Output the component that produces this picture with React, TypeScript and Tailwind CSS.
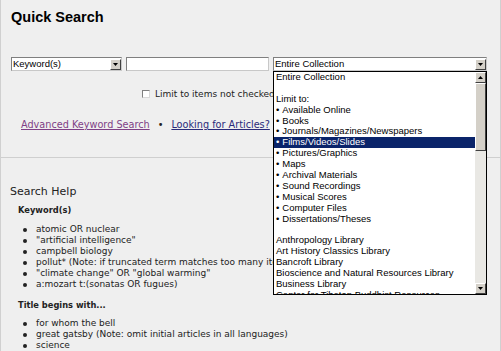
import React from 'react';

const sans = { fontFamily: '"Liberation Sans", Arial, sans-serif' };
const verdana = { fontFamily: '"DejaVu Sans", Verdana, sans-serif' };

function Arrow({ up = false }: { up?: boolean }) {
  return (
    <div className="w-[11px] h-[11px] shrink-0 bg-[#d4d0c8] border border-t-white border-l-white border-b-[#404040] border-r-[#404040] flex items-center justify-center">
      <svg width="5" height="3" viewBox="0 0 5 3">
        {up ? <polygon points="0,3 5,3 2.5,0" fill="#000" /> : <polygon points="0,0 5,0 2.5,3" fill="#000" />}
      </svg>
    </div>
  );
}

function Select({ label, width, open = false }: { label: string; width: string; open?: boolean }) {
  return (
    <div className={`relative ${width} h-[14px]`}>
      <div className="h-full bg-white border border-[#7f7f7f] border-b-[#c8c8c8] border-r-[#c8c8c8] flex items-center pl-[1px]">
        <span className="flex-1 text-[9.5px] leading-[12px] text-black" style={sans}>
          {label}
        </span>
        <Arrow />
      </div>
      {open && <Dropdown />}
    </div>
  );
}

const options: { text: string; bullet?: boolean; selected?: boolean }[] = [
  { text: 'Entire Collection' },
  { text: '' },
  { text: 'Limit to:' },
  { text: 'Available Online', bullet: true },
  { text: 'Books', bullet: true },
  { text: 'Journals/Magazines/Newspapers', bullet: true },
  { text: 'Films/Videos/Slides', bullet: true, selected: true },
  { text: 'Pictures/Graphics', bullet: true },
  { text: 'Maps', bullet: true },
  { text: 'Archival Materials', bullet: true },
  { text: 'Sound Recordings', bullet: true },
  { text: 'Musical Scores', bullet: true },
  { text: 'Computer Files', bullet: true },
  { text: 'Dissertations/Theses', bullet: true },
  { text: '' },
  { text: 'Anthropology Library' },
  { text: 'Art History Classics Library' },
  { text: 'Bancroft Library' },
  { text: 'Bioscience and Natural Resources Library' },
  { text: 'Business Library' },
  { text: 'Center for Tibetan Buddhist Resources' },
];

function Dropdown() {
  return (
    <div className="absolute left-0 top-[14px] w-full h-[224px] bg-white border border-black flex z-10">
      <div className="flex-1 overflow-hidden" style={sans}>
        {options.map((o, i) => (
          <div
            key={i}
            className={`h-[10.9px] leading-[10.9px] text-[9.5px] pl-[2px] whitespace-nowrap ${
              o.selected ? 'bg-[#0a246a] text-white' : 'text-black'
            }`}
          >
            {o.bullet && <span className="mr-[3px]">•</span>}
            {o.text}
          </div>
        ))}
      </div>
      <div className="w-[11px] flex flex-col">
        <Arrow up />
        <div className="h-[68px] bg-[#d4d0c8] border border-t-white border-l-white border-b-[#404040] border-r-[#404040]" />
        <div className="flex-1 bg-[#e9e8e4]" />
        <Arrow />
      </div>
    </div>
  );
}

function Bullet({ children }: { children: React.ReactNode }) {
  return (
    <li className="h-[11px] flex items-center">
      <span className="w-[4px] h-[4px] rounded-full bg-[#222] ml-[22px] mr-[9px] shrink-0" />
      <span className="leading-[11px] whitespace-nowrap">{children}</span>
    </li>
  );
}

export default function App() {
  return (
    <div className="w-[501px] h-[351px] overflow-hidden bg-[#efefef] border-l border-r border-[#d0d0d0] text-[#222]">
      <div className="mt-[9px] h-[16px] pl-[10px] text-[14.5px] leading-[16px] font-bold text-black" style={sans}>
        Quick Search
      </div>

      <div className="mt-[32px] pl-[10px] flex gap-[4px] items-start">
        <Select label="Keyword(s)" width="w-[111px]" />
        <div className="w-[143px] h-[14px] bg-white border border-[#7f7f7f] border-b-[#c8c8c8] border-r-[#c8c8c8]" />
        <Select label="Entire Collection" width="w-[214px]" open />
      </div>

      <div className="mt-[17px] h-[12px] pl-[141px] flex items-center gap-[5px]" style={verdana}>
        <span className="w-[8px] h-[8px] bg-white border border-[#808080] border-b-[#d8d8d8] border-r-[#d8d8d8]" />
        <span className="text-[9px] leading-[12px] whitespace-nowrap">Limit to items not checked out</span>
      </div>

      <div className="mt-[18px] h-[14px] pl-[20px] flex items-center text-[9.7px] leading-[14px]" style={verdana}>
        <a href="#" className="underline text-[#7f3f86]">Advanced Keyword Search</a>
        <span className="mx-[8px] text-[#222]">•</span>
        <a href="#" className="underline text-[#2a2a7a]">Looking for Articles?</a>
      </div>

      <div className="mt-[25px] h-px bg-[#cfcfcf]" />

      <div style={verdana}>
        <div className="mt-[27px] h-[14px] pl-[9px] text-[11px] leading-[14px] text-[#222]">Search Help</div>
        <div className="mt-[5px] h-[12px] pl-[17px] text-[8.3px] leading-[12px] font-bold">Keyword(s)</div>
        <ul className="mt-[8px] text-[9px]">
          <Bullet>atomic OR nuclear</Bullet>
          <Bullet>"artificial intelligence"</Bullet>
          <Bullet>campbell biology</Bullet>
          <Bullet>pollut* (Note: if truncated term matches too many items, the search may fail)</Bullet>
          <Bullet>"climate change" OR "global warming"</Bullet>
          <Bullet>a:mozart t:(sonatas OR fugues)</Bullet>
        </ul>
        <div className="mt-[9px] h-[12px] pl-[17px] text-[8.3px] leading-[12px] font-bold">Title begins with...</div>
        <ul className="mt-[7px] text-[9px]">
          <Bullet>for whom the bell</Bullet>
          <Bullet>great gatsby (Note: omit initial articles in all languages)</Bullet>
          <Bullet>science</Bullet>
        </ul>
      </div>
    </div>
  );
}
